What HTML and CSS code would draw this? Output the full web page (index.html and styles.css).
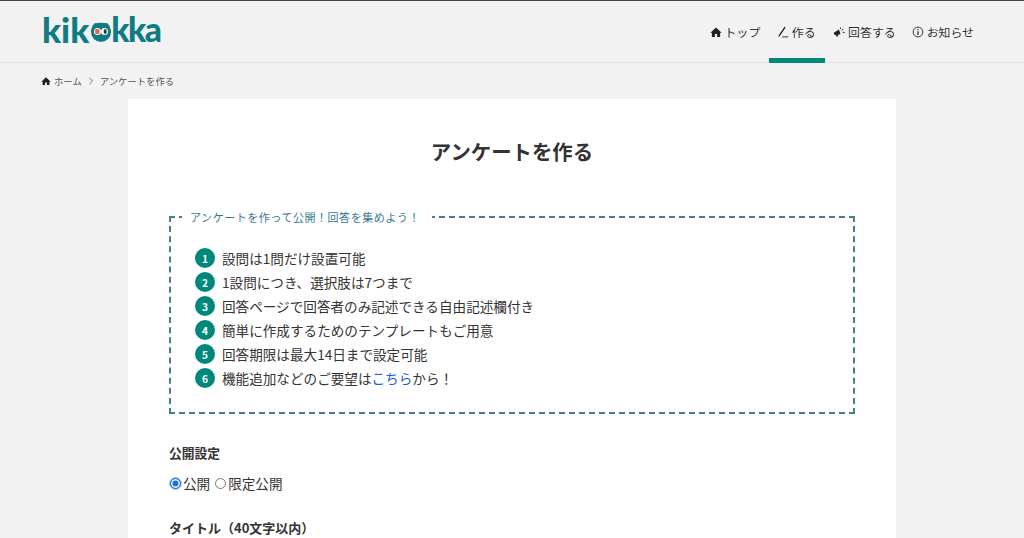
FILE: index.html
```html
<!DOCTYPE html>
<html lang="ja">
<head>
<meta charset="utf-8">
<title>アンケートを作る</title>
<link rel="stylesheet" href="styles.css">
</head>
<body>
<header class="site-header">
  <a class="logo" href="#"><span class="logo-start">kik</span><svg class="owl" viewBox="0 0 20 20" width="20" height="20"><path d="M3.500 1.200 Q10 0.400 16.500 1.200 Q20 5 20 10 A10 10 0 0 1 0 10 Q0 5 3.500 1.200Z" fill="#0f7c85"/><circle cx="6.500" cy="9.500" r="3.500" fill="#fff"/><circle cx="13.500" cy="9.500" r="3.500" fill="#fff"/><rect x="4.200" y="7" width="4.300" height="5" rx="1.200" fill="#e8664f"/><rect x="12.800" y="7.200" width="2.800" height="4.600" rx="1.200" fill="#333"/></svg><span class="logo-end">kka</span></a>
  <nav class="nav">
    <a class="nav-item nav-top" href="#"><svg class="nav-icon" viewBox="0 0 16 16"><path d="M8 2 L15.500 9 H13.500 V14.500 H9.500 V10.500 H6.500 V14.500 H2.500 V9 H0.500Z" fill="#222"/></svg>トップ</a>
    <a class="nav-item active" href="#"><svg class="nav-icon" viewBox="0 0 16 16"><path d="M10 1 L11.500 2 L4 13 L2 15 L2.500 12Z" fill="#222"/><path d="M7 14.500 H15" stroke="#222" stroke-width="1.200"/></svg>作る</a>
    <a class="nav-item" href="#"><svg class="nav-icon" viewBox="0 0 16 16"><path d="M1 9 L8 4.500 L10 11 L6.500 11.500 L7 14 L4.500 14 L4 12 L2 12Z" fill="#222"/><path d="M10 2 V4 M13.500 4 L11.500 6 M15.500 8.500 H13" stroke="#222" stroke-width="1.300"/></svg>回答する</a>
    <a class="nav-item" href="#"><svg class="nav-icon" viewBox="0 0 16 16"><circle cx="8" cy="8" r="6.500" fill="none" stroke="#222" stroke-width="1.200"/><path d="M8 7 V12 M8 4 V5.800" stroke="#222" stroke-width="1.600"/></svg>お知らせ</a>
  </nav>
</header>
<div class="breadcrumb">
  <svg class="crumb-icon" viewBox="0 0 16 16"><path d="M8 2 L15.500 9 H13.500 V14.500 H9.500 V10.500 H6.500 V14.500 H2.500 V9 H0.500Z" fill="#222"/></svg>
  <span>ホーム</span>
  <svg class="crumb-sep" viewBox="0 0 8 10"><path d="M2 1 L6 5 L2 9" fill="none" stroke="#555" stroke-width="1"/></svg>
  <span>アンケートを作る</span>
</div>
<main class="card">
  <h1 class="title">アンケートを作る</h1>
  <section class="guide">
    <h2 class="guide-title">アンケートを作って公開！回答を集めよう！</h2>
    <ol class="guide-list">
      <li><span class="num">1</span>設問は1問だけ設置可能</li>
      <li><span class="num">2</span>1設問につき、選択肢は7つまで</li>
      <li><span class="num">3</span>回答ページで回答者のみ記述できる自由記述欄付き</li>
      <li><span class="num">4</span>簡単に作成するためのテンプレートもご用意</li>
      <li><span class="num">5</span>回答期限は最大14日まで設定可能</li>
      <li><span class="num">6</span>機能追加などのご要望は<a class="link" href="#">こちら</a>から！</li>
    </ol>
  </section>
  <h3 class="label">公開設定</h3>
  <div class="radios">
    <label class="radio"><input type="radio" name="pub" checked>公開</label>
    <label class="radio"><input type="radio" name="pub">限定公開</label>
  </div>
  <h3 class="label label-title">タイトル（40文字以内）</h3>
</main>
</body>
</html>
```
FILE: styles.css
```css
* { box-sizing: border-box; }
html, body { height: 538px; overflow: hidden; }
body {
  margin: 0;
  background: #f2f2f2;
  color: #333;
  font-family: "Noto Sans CJK JP", "Noto Sans", sans-serif;
  font-size: 13.6px;
}
a { color: inherit; text-decoration: none; }
.site-header {
  height: 63px;
  border-top: 1px solid #444;
  border-bottom: 1px solid #e2e2e2;
  padding: 0 42px;
  display: flex;
  justify-content: space-between;
  align-items: stretch;
}
.logo {
  display: flex;
  align-items: center;
  height: 55px;
  font-family: "Lato", sans-serif;
  font-weight: 900;
  font-size: 35px;
  color: #0f7c85;
}
.logo-end { font-size: 33.5px; letter-spacing: -1.5px; }
.owl { margin: 6px 0 0 2px; }
.nav { display: flex; }
.nav-item {
  display: flex;
  align-items: center;
  gap: 3px;
  padding: 4px 8px 0;
  height: 62px;
  white-space: nowrap;
  font-size: 11.9px;
  color: #333;
  border-bottom: 5px solid transparent;
}
.nav-top { padding-right: 9px; }
.nav-item.active { border-bottom-color: #00897b; padding-left: 7.5px; padding-right: 9.5px; }
.nav-icon { width: 12px; height: 12px; flex: none; }
.breadcrumb {
  height: 36px;
  padding: 0 0 0 41px;
  display: flex;
  align-items: center;
  font-size: 9.35px;
  color: #555;
}
.crumb-icon { width: 10px; height: 10px; margin-right: 3px; }
.crumb-sep { width: 8px; height: 8px; margin: 0 5px; }
.card {
  width: 768px;
  height: 439px;
  margin: 0 auto;
  background: #fff;
  padding: 35px 41px 0;
}
.title {
  margin: 0 0 48px;
  text-align: center;
  font-size: 20.4px;
  line-height: 34px;
  font-weight: 700;
  color: #333;
}
.guide {
  position: relative;
  height: 198px;
  border: 2px dashed #467c90;
  padding: 28px 0 0 24px;
}
.guide-title {
  position: absolute;
  top: -9px;
  left: 11px;
  margin: 0;
  padding: 0 12px 0 8px;
  background: #fff;
  font-size: 11.05px;
  line-height: 17px;
  font-weight: 400;
  color: #3a7a92;
  letter-spacing: 0.5px;
}
.guide-list { list-style: none; margin: 0; padding: 0; }
.guide-list li {
  display: flex;
  align-items: center;
  height: 24px;
  font-size: 13.6px;
}
.num {
  width: 20px;
  height: 20px;
  border-radius: 50%;
  background: #00897b;
  color: #fff;
  font-size: 10.2px;
  font-weight: 700;
  display: flex;
  align-items: center;
  justify-content: center;
  margin-right: 7px;
  flex: none;
}
.link { color: #1a62d6; }
.label {
  margin: 30px 0 0;
  font-size: 12.75px;
  line-height: 18px;
  font-weight: 700;
}
.radios { display: flex; gap: 4px; margin-top: 11px; height: 20px; align-items: center; font-size: 13.6px; }
.radio { display: flex; align-items: center; }
.radio input {
  appearance: none;
  margin: 0 2px 0 1px;
  width: 11px;
  height: 11px;
  border: 1px solid #767676;
  border-radius: 50%;
  background: #fff;
}
.radio input:checked {
  border-color: #1a6fe0;
  background: #1a6fe0;
  box-shadow: inset 0 0 0 1.500px #fff, 0 0 0 1px #a9c8f5;
}
.label-title { margin-top: 26px; font-size: 13px; }
```
